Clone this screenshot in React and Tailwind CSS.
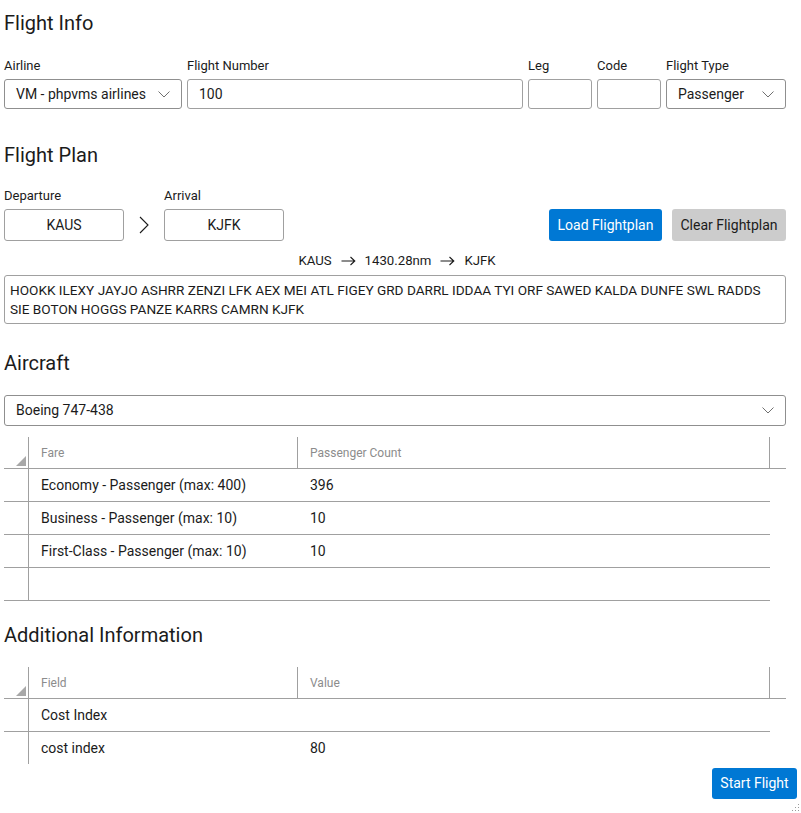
import React from "react";

const font = { fontFamily: 'Roboto, "Noto Sans", sans-serif' };

function Chevron() {
  return (
    <svg width="12" height="7" viewBox="0 0 12 7" className="shrink-0">
      <path d="M0.5 0.5 L6 6 L11.5 0.5" fill="none" stroke="#707070" strokeWidth="1" />
    </svg>
  );
}

function Arrow() {
  return (
    <svg width="15" height="10" viewBox="0 0 15 10" className="shrink-0">
      <path d="M0.5 5 H13.5 M9.5 1 L13.8 5 L9.5 9" fill="none" stroke="#1b1b1b" strokeWidth="1.1" />
    </svg>
  );
}

function Label({ children }) {
  return <div className="text-[13px] leading-[18px] mb-[4px] text-[#1b1b1b]">{children}</div>;
}

function Heading({ children, className = "" }) {
  return <div className={`text-[20px] leading-[28px] text-[#1b1b1b] ${className}`}>{children}</div>;
}

function Select({ value, className = "" }) {
  return (
    <div className={`h-[30px] border border-[#8f8f8f] rounded-[3px] flex items-center justify-between pl-[11px] pr-[11px] text-[14px] bg-white ${className}`}>
      <span>{value}</span>
      <Chevron />
    </div>
  );
}

function Input({ value = "", className = "" }) {
  return (
    <div className={`h-[30px] border border-[#a0a0a0] rounded-[3px] flex items-center pl-[11px] text-[14px] ${className}`}>
      {value}
    </div>
  );
}

function Grid({ cols, rows, lastLine = true }) {
  return (
    <div className="w-[782px] text-[14px]">
      {/* header */}
      <div className="flex h-[32px] border-b border-[#a0a0a0]">
        <div className="w-[25px] h-full border-r border-[#a0a0a0] relative">
          <svg width="10" height="10" viewBox="0 0 10 10" className="absolute right-[2px] bottom-[2px]">
            <polygon points="10,0 10,10 0,10" fill="#a8a8a8" />
          </svg>
        </div>
        <div className="w-[269px] border-r border-[#a0a0a0] flex items-center pl-[12px] pt-[1px] text-[12px] text-[#8c8c8c]">
          {cols[0]}
        </div>
        <div className="w-[472px] border-r border-[#a0a0a0] flex items-center pl-[12px] pt-[1px] text-[12px] text-[#8c8c8c]">
          {cols[1]}
        </div>
      </div>
      {rows.map((r, i) => {
        const line = lastLine || i < rows.length - 1;
        return (
          <div
            key={i}
            className={`flex w-[766px] ${line ? "h-[33px] border-b border-[#a0a0a0]" : "h-[32px]"}`}
          >
            <div className="w-[25px] h-full border-r border-[#a0a0a0]" />
            <div className="w-[269px] flex items-center pl-[12px] text-[#1b1b1b]">{r[0]}</div>
            <div className="flex-1 flex items-center pl-[12px] text-[#1b1b1b]">{r[1]}</div>
          </div>
        );
      })}
    </div>
  );
}

export default function App() {
  return (
    <div className="w-[801px] h-[813px] bg-white relative overflow-hidden text-[#1b1b1b]" style={font}>
      <div className="pl-[4px] w-[786px]">
        {/* Flight Info */}
        <Heading className="pt-[9px]">Flight Info</Heading>
        <div className="flex gap-[5px] mt-[20px]">
          <div className="w-[178px]">
            <Label>Airline</Label>
            <Select value="VM - phpvms airlines" />
          </div>
          <div className="w-[336px]">
            <Label>Flight Number</Label>
            <Input value="100" />
          </div>
          <div className="w-[64px]">
            <Label>Leg</Label>
            <Input />
          </div>
          <div className="w-[64px]">
            <Label>Code</Label>
            <Input />
          </div>
          <div className="w-[120px]">
            <Label>Flight Type</Label>
            <Select value="Passenger" />
          </div>
        </div>

        {/* Flight Plan */}
        <Heading className="mt-[32px]">Flight Plan</Heading>
        <div className="flex items-end mt-[18px]">
          <div className="w-[120px]">
            <Label>Departure</Label>
            <div className="h-[32px] border border-[#a0a0a0] rounded-[3px] flex items-center justify-center text-[14px]">KAUS</div>
          </div>
          <div className="w-[40px] h-[32px] flex items-center justify-center">
            <svg width="10" height="18" viewBox="0 0 10 18">
              <path d="M1 1 L9 9 L1 17" fill="none" stroke="#1b1b1b" strokeWidth="1.1" />
            </svg>
          </div>
          <div className="w-[120px]">
            <Label>Arrival</Label>
            <div className="h-[32px] border border-[#a0a0a0] rounded-[3px] flex items-center justify-center text-[14px]">KJFK</div>
          </div>
          <div className="flex-1" />
          <button className="h-[32px] w-[113px] rounded-[3px] bg-[#0078d4] text-white text-[14px]">Load Flightplan</button>
          <button className="h-[32px] w-[114px] ml-[10px] rounded-[3px] bg-[#cccccc] text-[#1b1b1b] text-[14px]">Clear Flightplan</button>
        </div>
        <div className="mt-[11px] h-[18px] text-[13.2px] leading-[18px] flex items-center justify-center gap-[9px] pl-[4px]">
          <span>KAUS</span>
          <Arrow />
          <span>1430.28nm</span>
          <Arrow />
          <span>KJFK</span>
        </div>
        <div className="mt-[5px] h-[49px] border border-[#a0a0a0] rounded-[3px] px-[5px] pt-[5px] text-[13.6px] leading-[19px]">
          HOOKK ILEXY JAYJO ASHRR ZENZI LFK AEX MEI ATL FIGEY GRD DARRL IDDAA TYI ORF SAWED KALDA DUNFE SWL RADDS SIE BOTON HOGGS PANZE KARRS CAMRN KJFK
        </div>

        {/* Aircraft */}
        <Heading className="mt-[25px]">Aircraft</Heading>
        <Select value="Boeing 747-438" className="mt-[18px] h-[31px]" />
        <div className="mt-[11px]">
          <Grid
            cols={["Fare", "Passenger Count"]}
            rows={[
              ["Economy - Passenger (max: 400)", "396"],
              ["Business - Passenger (max: 10)", "10"],
              ["First-Class - Passenger (max: 10)", "10"],
              ["", ""],
            ]}
          />
        </div>

        {/* Additional Information */}
        <Heading className="mt-[20px]">Additional Information</Heading>
        <div className="mt-[18px]">
          <Grid
            cols={["Field", "Value"]}
            rows={[
              ["Cost Index", ""],
              ["cost index", "80"],
            ]}
            lastLine={false}
          />
        </div>
      </div>
      <div className="flex justify-end pr-[4px] mt-[4px]">
        <button className="h-[31px] w-[85px] rounded-[3px] bg-[#0078d4] text-white text-[14px]">Start Flight</button>
      </div>
      {/* resize grip */}
      <svg width="8" height="8" viewBox="0 0 8 8" className="absolute right-[1px] bottom-[1px]">
        <rect x="6" y="0" width="1" height="1" fill="#9a9a9a" />
        <rect x="3" y="3" width="1" height="1" fill="#9a9a9a" />
        <rect x="6" y="3" width="1" height="1" fill="#9a9a9a" />
        <rect x="0" y="6" width="1" height="1" fill="#9a9a9a" />
        <rect x="3" y="6" width="1" height="1" fill="#9a9a9a" />
        <rect x="6" y="6" width="1" height="1" fill="#9a9a9a" />
      </svg>
    </div>
  );
}
